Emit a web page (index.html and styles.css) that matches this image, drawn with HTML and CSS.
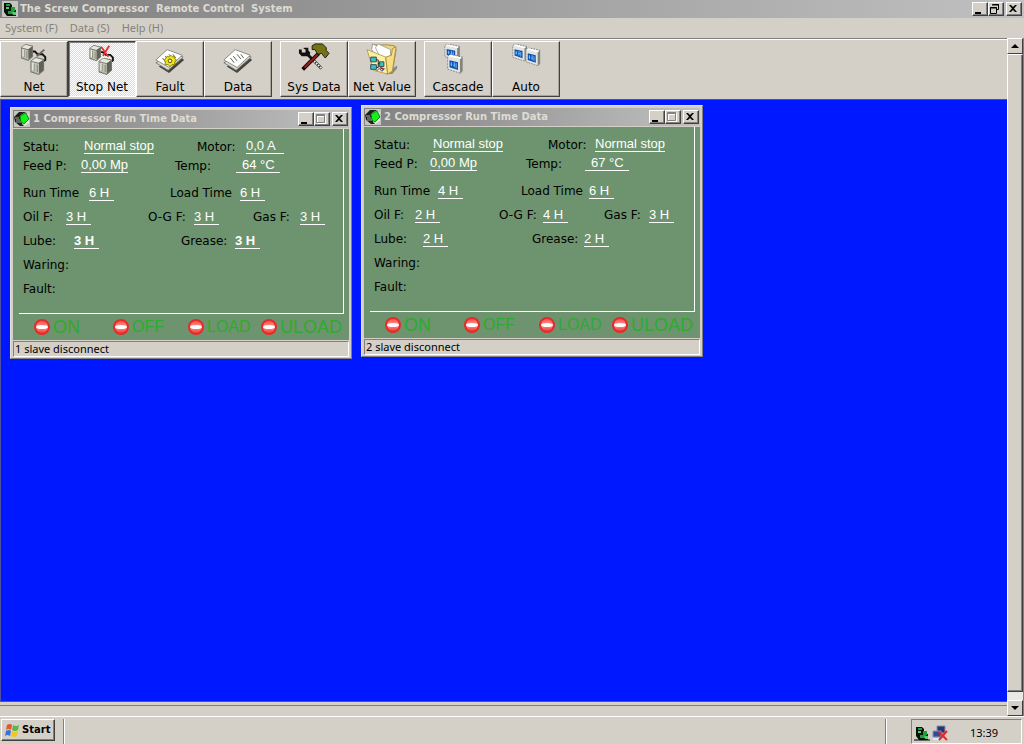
FILE: index.html
```html
<!DOCTYPE html>
<html lang="en">
<head>
<meta charset="utf-8">
<title>The Screw Compressor Remote Control System</title>
<link rel="stylesheet" href="styles.css">
</head>
<body>
<svg class="sprite" aria-hidden="true">
  <defs>
    <linearGradient id="led-fill" x1="0" x2="0" y1="0" y2="1"><stop offset="0" stop-color="#ff4444"/><stop offset=".5" stop-color="#ff9a90"/><stop offset="1" stop-color="#f02a2a"/></linearGradient>
    <symbol id="server" viewBox="0 0 13 19" preserveAspectRatio="none">
      <path d="M0 4 5 0 13 2V14L8 19 0 16Z" fill="#76786c"/>
      <path d="M1 4 5 1 12 3 8 6Z" fill="#e6e7dc"/>
      <path d="M8 6 12 3V14L8 17Z" fill="#60625a"/>
      <path d="M1 5 8 7V18L1 15Z" fill="#c0c2b4"/>
      <path d="M3.500 7V15M6.500 8V16" stroke="#85877a"/><path d="M2.500 6V14" stroke="#f8f8f0"/>
    </symbol>
    <symbol id="sheet" viewBox="0 0 32 27">
      <path d="M4 19 15 26 31 12 27 9Z" fill="#44443e"/>
      <path d="M1 15 14 23 30 9 20 5Z" fill="#dcdcd4" stroke="#77776f"/>
      <path d="M1 12 13 1 29 7 15 20Z" fill="#fff" stroke="#85857d"/>
      <path d="m8 10 4 5m-1-7 4 5m0-7 4 5m0-5 3 4" stroke="#55554e"/>
    </symbol>
    <symbol id="mini-window" viewBox="0 0 18 20" preserveAspectRatio="none">
      <path d="M1 2 4 0 17 3 14 5Z" fill="#fff"/>
      <path d="M1 2 4 0 17 3" fill="none" stroke="#777" stroke-dasharray="2 1"/>
      <path d="M14 5 17 3V17L14 20Z" fill="#85857f"/>
      <path d="M1 2 14 5V19L1 15Z" fill="#e4e4e0"/>
      <path d="M1 3V15L14 19" fill="none" stroke="#8a8a84" stroke-dasharray="2 1"/>
      <path d="M3 6 12 8V16L3 13Z" fill="#0c50b4"/>
      <path d="M5 8v4M7 11h2M8 8v5M10 9v5M4 10h2" stroke="#7cc0f6"/>
    </symbol>
    <symbol id="device" viewBox="0 0 16 16">
      <path d="M2 2h6l2 2v4l4 1v6H5l-3-4Z" fill="#061006"/>
      <path d="M4 3h4v2H4zM9 6h4v4H9zM6 10h6v3H6z" fill="#16a33a"/>
      <path d="M4 6h3v2H4zM10 11h4v3h-3z" fill="#55c96b"/>
    </symbol>
    <symbol id="chip" viewBox="0 0 16 16">
      <path d="m1 7 6-6 8 2v9l-5 3-9-4Z" fill="#e6e6de"/>
      <path d="M0 6 5 1l7 0-5 3 1 9 2 2H6L1 11Z" fill="#182018"/>
      <path d="m6 5 6-3 3 6-5 5-3-2Z" fill="#14f01c" stroke="#0a8a10"/>
      <path d="M1 7h4M2 9h4M2 11h5" stroke="#a8aaa4"/>
    </symbol>
    <symbol id="led" viewBox="0 0 16 16">
      <circle cx="8" cy="8" r="7" fill="url(#led-fill)" stroke="#e52a2a" stroke-width="2"/>
      <ellipse cx="8" cy="8" rx="6" ry="2" fill="#fff"/>
    </symbol>
    <symbol id="minimize" viewBox="0 0 12 10"><path d="M2 8h6v2H2z"/></symbol>
    <symbol id="maximize" viewBox="0 0 12 10"><path d="M2.500 1.500h8v8h-8zM2 2.500h9" fill="none" stroke="#fff"/><path d="M1.500.5h8v8h-8zM1 1.500h9" fill="none" stroke="#808080"/></symbol>
    <symbol id="restore" viewBox="0 0 12 10"><path d="M3.500.5h6v5h-2M3 1h7M1.500 3.500h6v6h-6zM1 4h7" fill="none" stroke="#000"/></symbol>
    <symbol id="close" viewBox="0 0 12 10"><path d="M2 1h2l2 2 2-2h2L7 4.500 10 8H8L6 6 4 8H2l3-3.500Z"/></symbol>
  </defs>
</svg>

<header class="titlebar titlebar--app">
  <svg class="titlebar__icon"><use href="#device"/></svg>
  <h1 class="titlebar__text">The Screw Compressor&nbsp; Remote Control&nbsp; System</h1>
  <div class="controls">
    <button class="control" aria-label="Minimize"><svg><use href="#minimize"/></svg></button>
    <button class="control" aria-label="Restore"><svg><use href="#restore"/></svg></button>
    <button class="control control--close" aria-label="Close"><svg><use href="#close"/></svg></button>
  </div>
</header>

<nav class="menubar">
  <button class="menubar__item">System (F)</button>
  <button class="menubar__item">Data (S)</button>
  <button class="menubar__item">Help (H)</button>
</nav>

<div class="frame">
  <div class="client">
    <div class="toolbar">
      <div class="toolbar__group">
        <button class="tool">
          <svg class="tool__icon" viewBox="0 0 34 34"><path d="M14 9h4l3 3h5l3 3v3l-3 2" fill="none" stroke="#111" stroke-width="2"/><path d="m20 14 8-7" stroke="#65655e" stroke-width="2"/><use href="#server" x="3" y="1" width="13" height="18"/><use href="#server" x="13" y="15" width="15" height="19"/></svg>
          Net</button>
        <button class="tool tool--pressed">
          <svg class="tool__icon" viewBox="0 0 34 34"><path d="M14 9h4l3 3h5l3 3v3l-3 2" fill="none" stroke="#111" stroke-width="2"/><use href="#server" x="3" y="1" width="13" height="18"/><use href="#server" x="13" y="15" width="15" height="19"/><path d="m16 3 8 11M25 2l-7 11" stroke="#e03030" stroke-width="2"/></svg>
          Stop Net</button>
        <button class="tool">
          <svg class="tool__icon" viewBox="0 0 34 34"><use href="#sheet" x="1" y="6" width="32" height="27"/><path d="m14 14 2 1 2-2 2 2 2-1 0 3 2 1-2 2 0 3-3 0-2 2-2-2-3 0 0-3-1-2 1-1Z" fill="#f2e61c" stroke="#857f00"/><circle cx="17" cy="19" r="2" fill="#faf7b0" stroke="#554f00"/></svg>
          Fault</button>
        <button class="tool">
          <svg class="tool__icon" viewBox="0 0 34 34"><use href="#sheet" x="1" y="6" width="32" height="27"/></svg>
          Data</button>
      </div>
      <div class="toolbar__group">
        <button class="tool">
          <svg class="tool__icon" viewBox="0 0 34 34"><path d="M1 7h3v3h4V7L6 6V5h5v3l2 2-1 4H4L1 11Z" fill="#111"/><path d="m10 12 15 15" stroke="#111" stroke-width="3"/><path d="m17 19 8 8" stroke="#f0f0e8" stroke-width="2" stroke-dasharray="2 1"/><path d="m22 11-17 17" stroke="#1a0000" stroke-width="4"/><path d="m21 12-14 14" stroke="#962222" stroke-width="2"/><path d="m15 3 3-2h8l4 4v3l3 3-4 5-4-5-4 1-3-5h-3Z" fill="#75731a" stroke="#1a1a00"/></svg>
          Sys Data</button>
        <button class="tool">
          <svg class="tool__icon" viewBox="0 0 34 34"><path d="m24 30 9-6v3l-5 6h-6Z" fill="#8b8a86"/><path d="m7 2 16 0 7 1 2 4-4 24-6 2Z" fill="#efd676" stroke="#a08a42"/><path d="m6 7 1-6 14 6 6 20-4 5Z" fill="#fff" stroke="#999"/><path d="m10 5 3-4 13 6v20l-4 2Z" fill="#fff" stroke="#a6a6a0"/><path d="m1 7 20 8 2 18-15-4Z" fill="#fbf0a4" stroke="#b8a04e"/><path d="m21 15 6-2 1-7 4-2-4 26-5 3Z" fill="#f6de84" stroke="#a8903c"/><path d="M5 15h6v5H5zM5 23h6v5H5zM14 20h5v5h-5z" fill="#35c4c6" stroke="#345"/><path d="M11 18h2v8h-2m2-4h2" fill="none" stroke="#222"/><path d="m11 30 3-3 3 3 3-3" fill="none" stroke="#2a3ac0"/><path d="m15 26 4 2" stroke="#a52a2a" stroke-width="2"/></svg>
          Net Value</button>
      </div>
      <div class="toolbar__group">
        <button class="tool">
          <svg class="tool__icon" viewBox="0 0 34 34"><use href="#mini-window" x="2" y="1" width="18" height="18"/><use href="#mini-window" x="5" y="12" width="18" height="21"/></svg>
          Cascade</button>
        <button class="tool">
          <svg class="tool__icon" viewBox="0 0 34 34"><use href="#mini-window" x="2" y="1" width="17" height="19"/><use href="#mini-window" x="16" y="5" width="17" height="20"/></svg>
          Auto</button>
      </div>
    </div>

    <main class="workspace">
      <section class="window window--one">
        <div class="titlebar">
          <svg class="titlebar__icon"><use href="#chip"/></svg>
          <h2 class="titlebar__text">1 Compressor Run Time Data</h2>
          <div class="controls">
            <button class="control" aria-label="Minimize"><svg><use href="#minimize"/></svg></button>
            <button class="control" aria-label="Maximize" disabled><svg><use href="#maximize"/></svg></button>
            <button class="control control--close" aria-label="Close"><svg><use href="#close"/></svg></button>
          </div>
        </div>
        <div class="window__body">
          <div class="readings">
            <dl class="row row--status"><dt>Statu:</dt><dd>Normal stop</dd><dt>Motor:</dt><dd class="wide">0,0 A</dd></dl>
            <dl class="row row--feed"><dt>Feed P:</dt><dd>0,00 Mp</dd><dt>Temp:</dt><dd class="indent">64 °C</dd></dl>
            <dl class="row row--time"><dt>Run Time</dt><dd>6 H</dd><dt>Load Time</dt><dd>6 H</dd></dl>
            <dl class="row row--filter"><dt>Oil F:</dt><dd>3 H</dd><dt>O-G F:</dt><dd>3 H</dd><dt>Gas F:</dt><dd>3 H</dd></dl>
            <dl class="row row--lube"><dt>Lube:</dt><dd class="strong">3 H</dd><dt>Grease:</dt><dd class="strong">3 H</dd></dl>
            <dl class="row"><dt>Waring:</dt><dd class="empty"></dd></dl>
            <dl class="row"><dt>Fault:</dt><dd class="empty"></dd></dl>
          </div>
          <ul class="leds">
            <li class="led"><svg class="led__lamp"><use href="#led"/></svg>ON</li>
            <li class="led led--small"><svg class="led__lamp"><use href="#led"/></svg>OFF</li>
            <li class="led led--small"><svg class="led__lamp"><use href="#led"/></svg>LOAD</li>
            <li class="led"><svg class="led__lamp"><use href="#led"/></svg>ULOAD</li>
          </ul>
        </div>
        <p class="window__status">1 slave disconnect</p>
      </section>

      <section class="window window--two">
        <div class="titlebar">
          <svg class="titlebar__icon"><use href="#chip"/></svg>
          <h2 class="titlebar__text">2 Compressor Run Time Data</h2>
          <div class="controls">
            <button class="control" aria-label="Minimize"><svg><use href="#minimize"/></svg></button>
            <button class="control" aria-label="Maximize" disabled><svg><use href="#maximize"/></svg></button>
            <button class="control control--close" aria-label="Close"><svg><use href="#close"/></svg></button>
          </div>
        </div>
        <div class="window__body">
          <div class="readings">
            <dl class="row row--status"><dt>Statu:</dt><dd>Normal stop</dd><dt>Motor:</dt><dd>Normal stop</dd></dl>
            <dl class="row row--feed"><dt>Feed P:</dt><dd>0,00 Mp</dd><dt>Temp:</dt><dd class="indent">67 °C</dd></dl>
            <dl class="row row--time"><dt>Run Time</dt><dd>4 H</dd><dt>Load Time</dt><dd>6 H</dd></dl>
            <dl class="row row--filter"><dt>Oil F:</dt><dd>2 H</dd><dt>O-G F:</dt><dd>4 H</dd><dt>Gas F:</dt><dd>3 H</dd></dl>
            <dl class="row row--lube"><dt>Lube:</dt><dd>2 H</dd><dt>Grease:</dt><dd>2 H</dd></dl>
            <dl class="row"><dt>Waring:</dt><dd class="empty"></dd></dl>
            <dl class="row"><dt>Fault:</dt><dd class="empty"></dd></dl>
          </div>
          <ul class="leds">
            <li class="led"><svg class="led__lamp"><use href="#led"/></svg>ON</li>
            <li class="led led--small"><svg class="led__lamp"><use href="#led"/></svg>OFF</li>
            <li class="led led--small"><svg class="led__lamp"><use href="#led"/></svg>LOAD</li>
            <li class="led"><svg class="led__lamp"><use href="#led"/></svg>ULOAD</li>
          </ul>
        </div>
        <p class="window__status">2 slave disconnect</p>
      </section>
    </main>
    <div class="statusbar"></div>
  </div>

  <div class="scrollbar">
    <button class="scrollbar__button" aria-label="Scroll up"><svg viewBox="0 0 8 4"><path d="M4 0 8 4H0Z"/></svg></button>
    <div class="scrollbar__thumb"></div>
    <button class="scrollbar__button" aria-label="Scroll down"><svg viewBox="0 0 8 4"><path d="M0 0h8L4 4Z"/></svg></button>
  </div>
</div>

<footer class="taskbar">
  <button class="start">
    <svg class="start__logo" viewBox="0 0 16 16"><path d="M3 3q3-2 5 0L7 8Q4 6 2 8Z" fill="#e8552d"/><path d="M9 3q3 2 6 0l-1 5q-3 2-6 0Z" fill="#58b947"/><path d="M2 9q3-2 5 0l-1 5q-3-2-5 0Z" fill="#3474d8"/><path d="M8 9q3 2 6 0l-1 5q-3 2-6 0Z" fill="#f5c526"/></svg>
    Start</button>
  <span class="taskbar__divider"></span>
  <span class="taskbar__space"></span>
  <span class="taskbar__divider"></span>
  <div class="tray">
    <svg class="tray__icon" viewBox="0 0 16 16"><use href="#device"/><path d="M0 15h16" stroke="#000"/></svg>
    <svg class="tray__icon" viewBox="0 0 16 16"><path d="M5 1h8v7H5z" fill="#29356e" stroke="#8a90b4"/><path d="M1 6h8v6H1z" fill="#344a96" stroke="#8a90b4"/><path d="M1 13h8v2H1z" fill="#e6e6f2"/><path d="m7 7 8 8m0-9-8 9" stroke="#e02828" stroke-width="2"/></svg>
    <time class="tray__clock">13:39</time>
  </div>
</footer>
</body>
</html>
```
FILE: styles.css
```css
:root {
  --face: #d4d0c8;
  --shade: #808080;
  --dark: #404040;
  --ui: "Noto Sans", "DejaVu Sans", sans-serif;
  --wide: "DejaVu Sans", sans-serif;
}

* { box-sizing: border-box; }

body {
  margin: 0;
  min-height: 100vh;
  display: flex;
  flex-direction: column;
  background: var(--face);
  color: #000;
  font: 11px/14px var(--ui);
}

h1, h2, p, dl, dd, ul { margin: 0; padding: 0; }
svg { display: block; }
.sprite { position: absolute; width: 0; height: 0; }

button {
  margin: 0;
  padding: 0;
  border: 0;
  background: var(--face);
  color: inherit;
  font: inherit;
}

/* Title bars */
.titlebar {
  display: flex;
  align-items: center;
  gap: 3px;
  height: 18px;
  padding: 0 1px;
  background: linear-gradient(to right, #808080, #c0c0c0);
}
.titlebar--app { padding: 0 2px; gap: 2px; }
.titlebar__icon { width: 16px; height: 16px; background: #c4c4c0; }
.titlebar__text {
  flex: 1;
  color: #dedbd3;
  font: bold 10px/16px var(--wide);
  white-space: nowrap;
}
.controls { display: flex; }
.control {
  width: 16px;
  height: 14px;
  border: 1px solid;
  border-color: #fff var(--dark) var(--dark) #fff;
  box-shadow: inset -1px -1px var(--shade);
}
.control svg { width: 12px; height: 10px; }
.control--close { margin-left: 2px; }

/* Menu */
.menubar { display: flex; gap: 12px; height: 20px; padding: 0 5px; }
.menubar__item { color: #85827c; }

/* Client area */
.frame { flex: 1; display: flex; }
.client { flex: 1; display: flex; flex-direction: column; border-top: 1px solid var(--shade); }

.toolbar {
  display: flex;
  gap: 8px;
  padding: 1px 0 2px;
  border-top: 1px solid #fff;
}
.toolbar__group { display: flex; }
.tool {
  display: flex;
  flex-direction: column;
  align-items: center;
  gap: 3px;
  width: 68px;
  height: 56px;
  padding-top: 1px;
  border: 1px solid;
  border-color: #fff var(--dark) var(--dark) #fff;
  box-shadow: inset -1px -1px #a8a49c;
  font: 12px/18px var(--wide);
}
.tool__icon { width: 34px; height: 34px; }
.tool--pressed {
  padding-top: 2px;
  border-color: var(--dark) #fff #fff var(--dark);
  box-shadow: inset 1px 1px var(--shade);
  background: repeating-conic-gradient(#fff 0 25%, #dedbd5 0 50%) 0 0 / 2px 2px;
}

.workspace {
  position: relative;
  flex: 1;
  border: 1px solid #50509c;
  border-right: 0;
  background: #0018ff;
}
.statusbar { height: 14px; border-top: 3px solid var(--face); box-shadow: inset 0 1px var(--shade); }

.scrollbar {
  display: flex;
  flex-direction: column;
  width: 17px;
  border-right: 1px solid var(--shade);
  background: #eae8e4;
}
.scrollbar__button, .scrollbar__thumb {
  border: 1px solid;
  border-color: #fff var(--dark) var(--dark) #fff;
  background: var(--face);
}
.scrollbar__button { display: grid; place-items: center; height: 16px; }
.scrollbar__button svg { width: 8px; height: 4px; }
.scrollbar__thumb { flex: 1; margin-bottom: 8px; box-shadow: inset -1px -1px var(--shade); }

/* Compressor windows */
.window {
  position: absolute;
  width: 342px;
  padding: 2px 2px 1px;
  border: 1px solid;
  border-color: #e4e2dc var(--shade) var(--shade) #e4e2dc;
  background: var(--face);
}
.window--one { left: 9px; top: 7px; }
.window--two { left: 360px; top: 5px; --value-shift: -2px; }
.window__body { margin-top: 1px; background: #6d946e; }

.readings {
  margin: 0 5px 0 6px;
  padding: 8px 0 12px 4px;
  border: solid #fff;
  border-width: 0 1px 1px 0;
}
.row {
  display: grid;
  align-items: center;
  height: 24px;
  grid-template-columns: 61px 1fr;
  font: 12px/16px var(--wide);
}
.row dd {
  justify-self: start;
  min-width: 25px;
  margin-left: var(--value-shift, 0);
  border-bottom: 1px solid #fff;
  color: #fff;
  font: 13px/14px "Liberation Sans", sans-serif;
  white-space: nowrap;
}
.row dd.wide { min-width: 38px; }
.row dd.indent { min-width: 44px; padding-left: 6px; }
.row dd.strong { font-weight: bold; }
.row dd.empty { border: 0; }
.row--status { height: 19px; grid-template-columns: 61px 113px 49px 1fr; }
.row--feed { height: 19px; margin-bottom: 6px; grid-template-columns: 58px 94px 61px 1fr; }
.row--time { grid-template-columns: 66px 81px 70px 1fr; }
.row--filter { grid-template-columns: 43px 82px 46px 59px 47px 1fr; }
.row--lube { grid-template-columns: 51px 107px 54px 1fr; }

.leds {
  display: grid;
  grid-template-columns: 79px 75px 73px 1fr;
  height: 26px;
  padding-left: 21px;
  list-style: none;
}
.led {
  display: flex;
  align-items: center;
  gap: 3px;
  color: #2eaa2e;
  font: 18px/24px "Liberation Sans", sans-serif;
}
.led--small { font-size: 16px; }
.led__lamp { width: 16px; height: 16px; }

.window__status {
  margin-top: 1px;
  padding: 0 1px;
  border: 1px solid;
  border-color: var(--shade) #fff #fff var(--shade);
}

/* Taskbar */
.taskbar {
  display: flex;
  gap: 8px;
  height: 28px;
  padding: 2px 2px 0 1px;
  border-top: 1px solid #fff;
}
.start {
  display: flex;
  align-items: center;
  gap: 2px;
  width: 54px;
  height: 22px;
  padding-left: 2px;
  border: 1px solid;
  border-color: #fff var(--dark) var(--dark) #fff;
  box-shadow: inset -1px -1px var(--shade);
  font: bold 10px/16px var(--wide);
}
.start__logo { width: 16px; height: 16px; }
.taskbar__divider { width: 2px; border-left: 1px solid var(--shade); background: #fff; }
.taskbar__space { flex: 1; }
.tray {
  display: flex;
  align-items: center;
  gap: 2px;
  width: 111px;
  margin-left: 16px;
  padding: 2px 23px 0 2px;
  border: 1px solid;
  border-color: var(--shade) #fff #fff var(--shade);
}
.tray__icon { width: 16px; height: 16px; }
.tray__clock { margin-left: auto; }
```
